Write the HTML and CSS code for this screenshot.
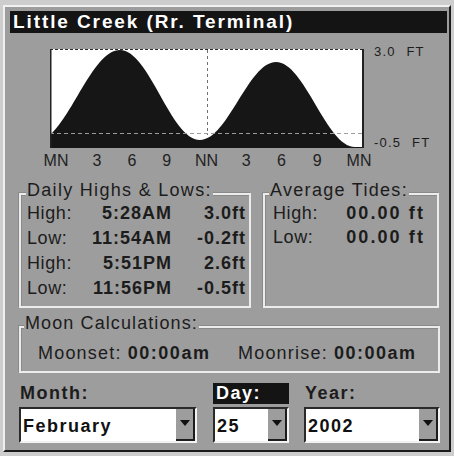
FILE: index.html
```html
<!DOCTYPE html>
<html lang="en">
<head>
<meta charset="utf-8">
<title>Little Creek (Rr. Terminal)</title>
<link rel="stylesheet" href="styles.css">
</head>
<body>
<div class="window">
  <div class="title">Little Creek (Rr. Terminal)</div>

  <div class="chart-row">
    <svg class="chart" width="314" height="99" viewBox="0 0 314 99">
      <rect width="314" height="99" fill="#ffffff"/>
      <path d="M-15,93 C15.96,93 39.04,1 70,1 C99.14,1 120.86,91 150,91 C177.68,91 198.32,13 226,13 C254.77,13 276.23,98 305,98 L314,98 L314,99 L-15,99 Z" fill="#161616"/>
      <line x1="0" y1="0.5" x2="314" y2="0.5" stroke="#2a2a2a" stroke-dasharray="3 2"/>
      <line x1="0" y1="84.5" x2="314" y2="84.5" stroke="#9c9c9c" stroke-dasharray="4 3"/>
      <line x1="157.5" y1="1" x2="157.5" y2="86" stroke="#707070" stroke-dasharray="3 3"/>
      <line x1="0.75" y1="0" x2="0.75" y2="99" stroke="#222" stroke-width="1.5"/>
      <line x1="313" y1="0" x2="313" y2="99" stroke="#222" stroke-width="2"/>
    </svg>
    <div class="scale"><span>3.0 FT</span><span>-0.5 FT</span></div>
  </div>

  <div class="axis">
    <span>MN</span><span>3</span><span>6</span><span>9</span><span>NN</span><span>3</span><span>6</span><span>9</span><span>MN</span>
  </div>

  <div class="groups">
    <div class="group daily">
      <div class="group-title">Daily Highs &amp; Lows:</div>
      <div class="tide-grid">
        <span>High:</span><b>5:28AM</b><b>3.0ft</b>
        <span>Low:</span><b>11:54AM</b><b>-0.2ft</b>
        <span>High:</span><b>5:51PM</b><b>2.6ft</b>
        <span>Low:</span><b>11:56PM</b><b>-0.5ft</b>
      </div>
    </div>
    <div class="group average">
      <div class="group-title">Average Tides:</div>
      <div class="avg-grid">
        <span>High:</span><b>00.00 ft</b>
        <span>Low:</span><b>00.00 ft</b>
      </div>
    </div>
  </div>

  <div class="group moon">
    <div class="group-title">Moon Calculations:</div>
    <div class="moon-row">
      <span class="moon-item">Moonset: <b>00:00am</b></span>
      <span class="moon-item">Moonrise: <b>00:00am</b></span>
    </div>
  </div>

  <div class="date-row">
    <div class="field month">
      <div class="field-label">Month:</div>
      <div class="select"><span class="select-text">February</span><span class="select-btn"><i class="arrow"></i></span></div>
    </div>
    <div class="field day">
      <div class="field-label active">Day:</div>
      <div class="select"><span class="select-text">25</span><span class="select-btn"><i class="arrow"></i></span></div>
    </div>
    <div class="field year">
      <div class="field-label">Year:</div>
      <div class="select"><span class="select-text">2002</span><span class="select-btn"><i class="arrow"></i></span></div>
    </div>
  </div>
</div>
</body>
</html>
```

FILE: styles.css
```css
html, body {
  margin: 0;
  padding: 0;
}
body {
  width: 454px;
  height: 456px;
  overflow: hidden;
  background: #cdcdcd;
  font-family: "Liberation Sans", Arial, sans-serif;
  color: #1c1c1c;
}
b {
  font-weight: bold;
}

.window {
  box-sizing: border-box;
  margin: 5px 0 0 3px;
  width: 448px;
  height: 447px;
  background: #9d9d9d;
  border-top: 2px solid #f0f0f0;
  border-left: 2px solid #f0f0f0;
  border-right: 2px solid #1c1c1c;
  border-bottom: 2px solid #1c1c1c;
  padding: 4px 2px 0 5px;
}

.title {
  height: 22px;
  line-height: 22px;
  background: #141414;
  color: #ffffff;
  font-weight: bold;
  font-size: 19px;
  letter-spacing: 1.9px;
  padding-left: 3px;
  white-space: nowrap;
}

/* chart */
.chart-row {
  display: flex;
  align-items: flex-start;
  margin: 16px 0 0 40px;
  height: 99px;
}
.chart {
  display: block;
  flex: none;
}
.scale {
  display: flex;
  flex-direction: column;
  justify-content: space-between;
  margin: -5px 0 0 10px;
  height: 107px;
  font-size: 13px;
  line-height: 16px;
  letter-spacing: 1.2px;
  word-spacing: 6px;
  white-space: nowrap;
}

.axis {
  display: grid;
  grid-template-columns: 44px 38px 32px 37.5px 42px 37.5px 33px 38.5px 45px;
  margin: 4px 0 0 24px;
  font-size: 16px;
  line-height: 18px;
  text-align: center;
  color: #222;
}

/* group boxes */
.groups {
  display: flex;
  gap: 12px;
  margin: 23px 0 0 9px;
  width: 420px;
}
.group {
  box-sizing: border-box;
  border: 2px solid #ececec;
  box-shadow: inset 1px 1px 0 #8a8a8a, -1px -1px 0 #8a8a8a;
}
.group-title {
  display: table;
  margin: -15px 0 0 -1px;
  padding: 0 1px;
  background: #9d9d9d;
  font-size: 18px;
  line-height: 20px;
  letter-spacing: 1.3px;
  white-space: nowrap;
}
.daily {
  width: 232px;
  padding: 0 2px 5px 6px;
}
.average {
  flex: 1;
  padding: 0 12px 5px 8px;
}
.average .group-title {
  margin-left: -4px;
}
.tide-grid {
  display: grid;
  grid-template-columns: 60px 85px 74px;
  margin-top: 1px;
  font-size: 18px;
  line-height: 25px;
  letter-spacing: 0.6px;
}
.tide-grid b {
  text-align: right;
  letter-spacing: 1px;
}
.avg-grid {
  display: grid;
  grid-template-columns: 70px 82px;
  margin-top: 1px;
  font-size: 18px;
  line-height: 24px;
  letter-spacing: 0.6px;
}
.avg-grid b {
  text-align: right;
  letter-spacing: 2.1px;
  white-space: nowrap;
}

.moon {
  margin: 18px 0 0 9px;
  width: 421px;
  padding: 0 0 8px 17px;
}
.moon .group-title {
  margin-left: -14px;
  letter-spacing: 1.1px;
}
.moon-row {
  display: flex;
  margin-top: 10px;
  font-size: 18px;
  line-height: 20px;
  letter-spacing: 1.2px;
  white-space: nowrap;
}
.moon-item {
  width: 205px;
}
.moon-item b {
  letter-spacing: 1.5px;
}

/* date selectors */
.date-row {
  display: flex;
  gap: 16px;
  margin: 10px 0 0 9px;
}
.month { width: 178px; }
.day { width: 76px; }
.year { width: 136px; margin-left: -1px; }
.field-label {
  height: 21px;
  line-height: 21px;
  font-weight: bold;
  font-size: 18px;
  letter-spacing: 1.5px;
  padding-left: 1px;
}
.field-label.active {
  background: #141414;
  color: #ffffff;
  padding-left: 3px;
}
.select {
  box-sizing: border-box;
  display: flex;
  height: 36px;
  margin-top: 3px;
  background: #ffffff;
  border-top: 2px solid #2a2a2a;
  border-left: 2px solid #2a2a2a;
  border-right: 2px solid #f2f2f2;
  border-bottom: 2px solid #f2f2f2;
}
.select-text {
  flex: 1;
  padding-left: 2px;
  font-weight: bold;
  font-size: 18px;
  line-height: 34px;
  letter-spacing: 1.5px;
  color: #111;
}
.select-btn {
  box-sizing: border-box;
  width: 19px;
  background: #9d9d9d;
  border-right: 2px solid #1c1c1c;
  border-bottom: 2px solid #1c1c1c;
  display: flex;
  justify-content: center;
  padding-top: 11px;
}
.arrow {
  width: 0;
  height: 0;
  border-left: 5px solid transparent;
  border-right: 5px solid transparent;
  border-top: 6px solid #111;
}
```
